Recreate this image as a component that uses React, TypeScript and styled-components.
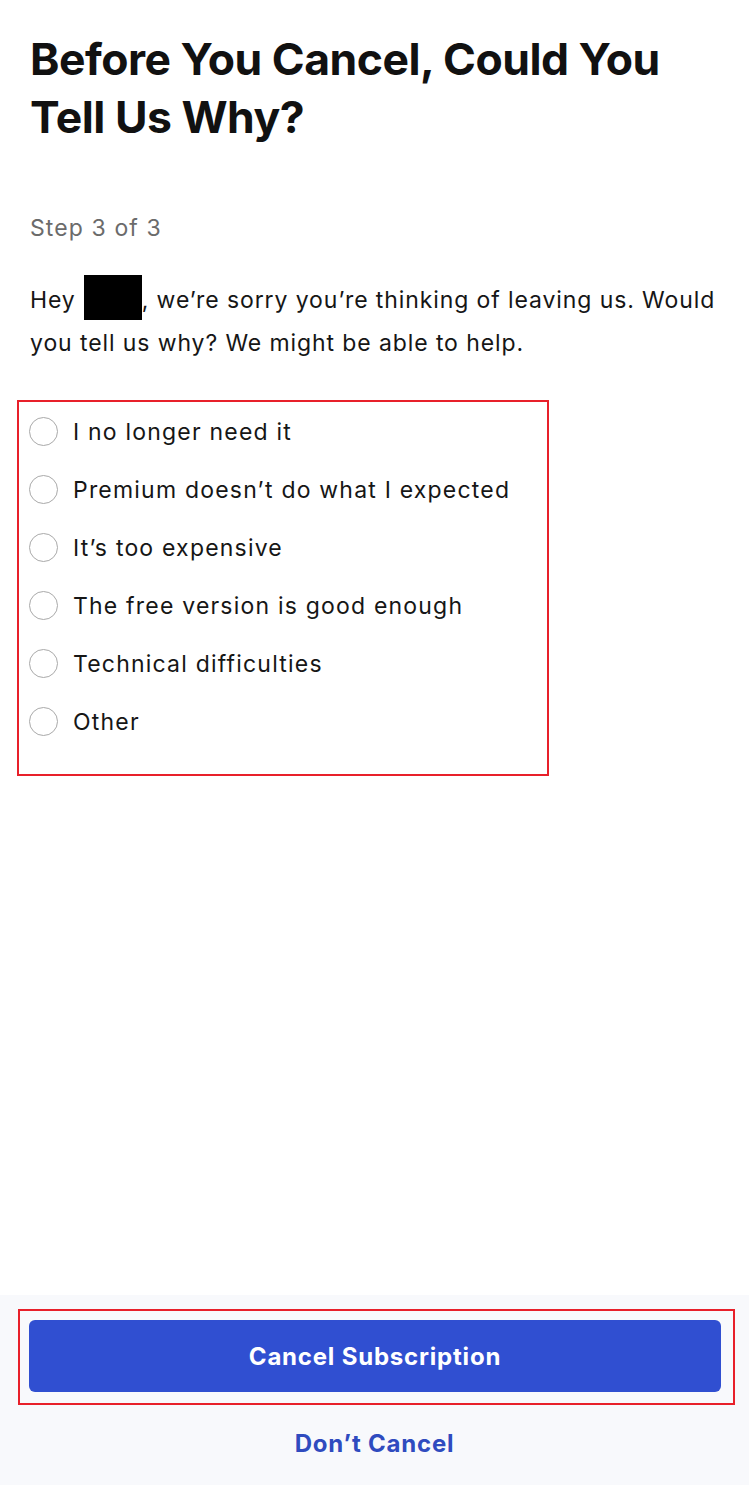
import styled, { createGlobalStyle } from 'styled-components';

const GlobalStyle = createGlobalStyle`
    * {
        box-sizing: border-box;
    }

    html,
    body {
        margin: 0;
        padding: 0;
        background: #ffffff;
    }

    body {
        font-family: Inter, 'Noto Sans', sans-serif;
        color: #141414;
    }
`;

const Page = styled.div`
    display: flex;
    flex-direction: column;
    width: 749px;
    min-height: 1485px;
`;

const Main = styled.main`
    flex: 1;
    padding: 30px 30px 0;
`;

const Title = styled.h1`
    margin: 0;
    font-size: 44.5px;
    font-weight: 700;
    line-height: 58px;
    letter-spacing: -0.5px;
    color: #111111;
`;

const Step = styled.p`
    margin: 66px 0 0;
    font-size: 23px;
    line-height: 32px;
    letter-spacing: 1.1px;
    color: #6b6b6b;
`;

const Intro = styled.p`
    margin: 31px 0 0;
    font-size: 23px;
    line-height: 43px;
    letter-spacing: 0.9px;
    color: #161616;
`;

const Redacted = styled.span`
    display: inline-block;
    width: 58px;
    height: 45px;
    margin: 0 0 -12px 8px;
    background: #000000;
`;

const Highlight = styled.div`
    border: 2.5px solid #e8202a;
`;

const Options = styled(Highlight)`
    display: flex;
    flex-direction: column;
    width: 532px;
    margin: 35px 0 0 -13px;
    padding: 15px 0 38px 10px;
    gap: 29px;
`;

const Option = styled.label`
    display: flex;
    align-items: center;
    gap: 15px;
    height: 29px;
    font-size: 23px;
    letter-spacing: 1.2px;
    color: #161616;
    cursor: pointer;
`;

const Radio = styled.input.attrs({ type: 'radio', name: 'reason' })`
    appearance: none;
    margin: 0;
    width: 29px;
    height: 29px;
    border: 1.5px solid #a9a9a9;
    border-radius: 50%;
    background: #ffffff;
    flex-shrink: 0;
`;

const Footer = styled.footer`
    display: flex;
    flex-direction: column;
    align-items: center;
    padding: 14px 0 22px;
    background: #f8f9fc;
`;

const ButtonFrame = styled(Highlight)`
    align-self: stretch;
    margin: 0 14px 0 18px;
    padding: 9px 12px 11px 9px;
`;

const PrimaryButton = styled.button`
    display: block;
    width: 100%;
    height: 72px;
    border: none;
    border-radius: 6px;
    background: #304fd1;
    color: #ffffff;
    font-family: Inter, 'Noto Sans', sans-serif;
    font-size: 24px;
    font-weight: 700;
    letter-spacing: 0.8px;
    cursor: pointer;
`;

const LinkButton = styled.button`
    margin-top: 20px;
    border: none;
    background: none;
    color: #2f4bbf;
    font-family: Inter, 'Noto Sans', sans-serif;
    font-size: 24px;
    font-weight: 700;
    letter-spacing: 0.8px;
    line-height: 36px;
    cursor: pointer;
`;

const reasons = [
    'I no longer need it',
    'Premium doesn\u2019t do what I expected',
    'It\u2019s too expensive',
    'The free version is good enough',
    'Technical difficulties',
    'Other',
];

const App = () => {
    return (
        <>
            <GlobalStyle />
            <Page>
                <Main>
                    <Title>
                        Before You Cancel, Could You
                        <br />
                        Tell Us Why?
                    </Title>
                    <Step>Step 3 of 3</Step>
                    <Intro>
                        Hey<Redacted />, we’re sorry you’re thinking of leaving us. Would
                        <br />
                        you tell us why? We might be able to help.
                    </Intro>
                    <Options>
                        {reasons.map((r) => (
                            <Option key={r}>
                                <Radio value={r} />
                                {r}
                            </Option>
                        ))}
                    </Options>
                </Main>
                <Footer>
                    <ButtonFrame>
                        <PrimaryButton>Cancel Subscription</PrimaryButton>
                    </ButtonFrame>
                    <LinkButton>Don’t Cancel</LinkButton>
                </Footer>
            </Page>
        </>
    );
};

export default App;
